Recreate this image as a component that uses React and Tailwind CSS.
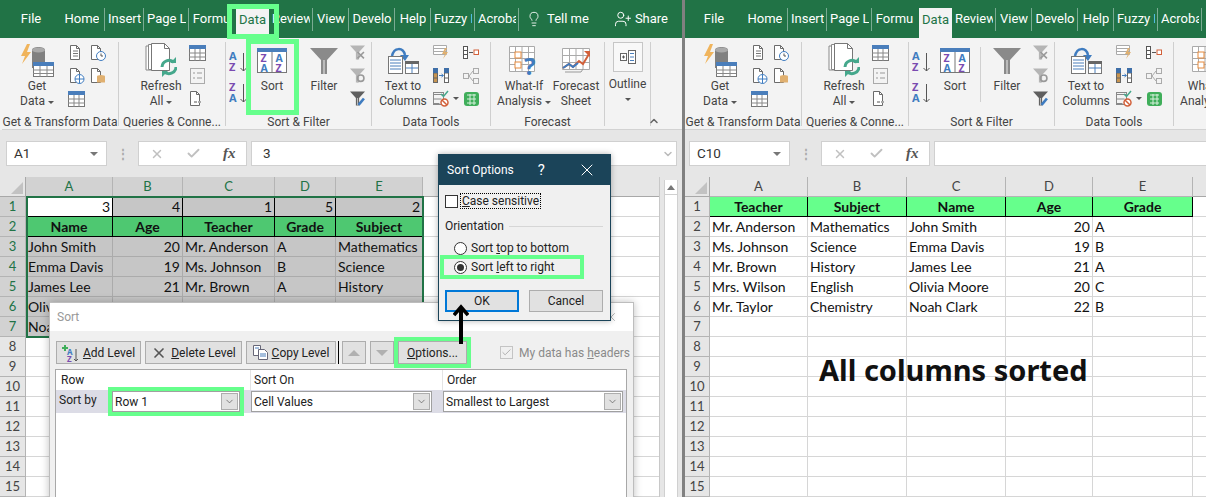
import { Lightbulb, UserPlus, X, Check, ChevronDown, ChevronUp } from 'lucide-react'

const tabs = [
  { label: 'Home', w: 'w-[46px]' },
  { label: 'Insert', w: 'w-[39px]' },
  { label: 'Page L', w: 'w-[45px]' },
  { label: 'Formu', w: 'w-[45px]', last: true },
]
const tabsAfter = [
  { label: 'Review', w: 'w-[44px]' },
  { label: 'View', w: 'w-[36px]' },
  { label: 'Develo', w: 'w-[46px]' },
  { label: 'Help', w: 'w-[36px]' },
  { label: 'Fuzzy L', w: 'w-[44px]' },
  { label: 'Acroba', w: 'w-[44px]' },
]

const leftRows = [
  ['3', '4', '1', '5', '2'],
  ['Name', 'Age', 'Teacher', 'Grade', 'Subject'],
  ['John Smith', '20', 'Mr. Anderson', 'A', 'Mathematics'],
  ['Emma Davis', '19', 'Ms. Johnson', 'B', 'Science'],
  ['James Lee', '21', 'Mr. Brown', 'A', 'History'],
  ['Olivia Moore', '20', 'Mrs. Wilson', 'C', 'English'],
  ['Noah Clark', '22', 'Mr. Taylor', 'B', 'Chemistry'],
]

const rightRows = [
  ['Teacher', 'Subject', 'Name', 'Age', 'Grade'],
  ['Mr. Anderson', 'Mathematics', 'John Smith', '20', 'A'],
  ['Ms. Johnson', 'Science', 'Emma Davis', '19', 'B'],
  ['Mr. Brown', 'History', 'James Lee', '21', 'A'],
  ['Mrs. Wilson', 'English', 'Olivia Moore', '20', 'C'],
  ['Mr. Taylor', 'Chemistry', 'Noah Clark', '22', 'B'],
]

const Doc = ({ children }) => (
  <svg className="w-[18px] h-[18px]" viewBox="0 0 18 18">
    <path d="M2.5 1.5h6l3 3v11h-9z" fill="#fff" stroke="#6b6b6b" />
    <path d="M8.5 1.5v3h3" fill="none" stroke="#6b6b6b" />
    {children}
  </svg>
)

const TableBlue = ({ size = 'w-[17px] h-[16px]' }) => (
  <svg className={size} viewBox="0 0 17 16">
    <rect x="0.5" y="0.5" width="16" height="15" fill="#fff" stroke="#777" />
    <rect x="0" y="0" width="17" height="4" fill="#4a7ebb" />
    <path d="M0 8h17M0 12h17M6 4v12M11 4v12" stroke="#888" />
  </svg>
)

const AZ = ({ flip }) => (
  <svg className="w-[20px] h-[26px]" viewBox="0 0 20 26">
    <text x="0" y="11" fontSize="11" fontWeight="700" fontFamily="Noto Sans" fill={flip ? '#7a4bb0' : '#3f7cc0'}>{flip ? 'Z' : 'A'}</text>
    <text x="0" y="22" fontSize="11" fontWeight="700" fontFamily="Noto Sans" fill={flip ? '#3f7cc0' : '#7a4bb0'}>{flip ? 'A' : 'Z'}</text>
    <path d="M14.5 4v18M11.5 19l3 3 3-3" fill="none" stroke="#555" />
  </svg>
)

const SortIcon = () => (
  <svg className="w-[30px] h-[26px]" viewBox="0 0 30 26">
    <rect x="0.5" y="0.5" width="29" height="24" fill="#fff" stroke="#777" />
    <rect x="0" y="0" width="30" height="4" fill="#4a7ebb" />
    <path d="M15 4v21" stroke="#777" />
    <text x="3.5" y="14" fontSize="10.5" fontWeight="700" fontFamily="Noto Sans" fill="#7a4bb0">Z</text>
    <text x="3.5" y="24" fontSize="10.5" fontWeight="700" fontFamily="Noto Sans" fill="#3f7cc0">A</text>
    <text x="18.5" y="14" fontSize="10.5" fontWeight="700" fontFamily="Noto Sans" fill="#3f7cc0">A</text>
    <text x="18.5" y="24" fontSize="10.5" fontWeight="700" fontFamily="Noto Sans" fill="#7a4bb0">Z</text>
  </svg>
)

const Funnel = ({ className, fill = '#8a8a8a', children }) => (
  <svg className={className} viewBox="0 0 28 26">
    <path d="M0 0h28L17 12v14h-6V12z" fill={fill} />
    <path d="M13 12h2v14h-2z" fill="#bbb" />
    {children}
  </svg>
)

const GetDataIcon = () => (
  <svg className="w-[34px] h-[34px]" viewBox="0 0 34 34">
    <path d="M7 0L1 12h4L2 20l9-12H7l3-8z" fill="#f0b45c" />
    <path d="M12 6c0-4 13-4 13 0v18H12z" fill="#808080" />
    <ellipse cx="18.5" cy="6" rx="6.5" ry="2.5" fill="#aaa" />
    <rect x="13.5" y="18.5" width="20" height="14" fill="#fff" stroke="#777" />
    <rect x="13" y="18" width="21" height="4" fill="#4a7ebb" />
    <path d="M13 26h20M13 29.5h20M20 22v11M27 22v11" stroke="#888" />
  </svg>
)

const RefreshIcon = () => (
  <svg className="w-[32px] h-[36px]" viewBox="0 0 32 36">
    <path d="M1 3h15v24H1z" fill="#fff" stroke="#888" />
    <path d="M3.5 1.5h14v25h-14z" fill="#fff" stroke="#888" />
    <path d="M6.5 0.5h13l5 5v22h-18z" fill="#fff" stroke="#777" />
    <path d="M19.5 0.5v5h5" fill="none" stroke="#777" />
    <path d="M17 24a7 7 0 0 1 12-4.5M31 24a7 7 0 0 1-12 4.5" fill="none" stroke="#45a88c" strokeWidth="3" />
    <path d="M25 20h6v-6zM23 28h-6v6z" fill="#45a88c" />
  </svg>
)

const TextColsIcon = () => (
  <svg className="w-[31px] h-[28px]" viewBox="0 0 31 28">
    <path d="M4 9c2-9 11-9 13-1" fill="none" stroke="#3f7cc0" strokeWidth="2.5" />
    <path d="M12 8h9l-4 6z" fill="#3f7cc0" />
    <rect x="0.5" y="9.5" width="14" height="17" fill="#fff" stroke="#777" />
    <path d="M2 13h11M2 16h11M2 19h11M2 22h11" stroke="#4a7ebb" />
    <rect x="17.5" y="14.5" width="13" height="12" fill="#fff" stroke="#777" />
    <rect x="17" y="14" width="14" height="3" fill="#666" />
    <path d="M24 17v9M18 21h12" stroke="#4a7ebb" />
  </svg>
)

const WhatIfIcon = () => (
  <svg className="w-[30px] h-[30px]" viewBox="0 0 30 30">
    <path d="M0.5 0.5h25v25h-25zM0.5 6.5h25M0.5 12.5h25M0.5 18.5h25M6.5 0.5v25M13 0.5v25M19.5 0.5v25" fill="#fff" stroke="#aaa" />
    <rect x="6" y="6" width="6" height="6" fill="#fff" stroke="#e68a3c" />
    <rect x="6" y="16" width="6" height="6" fill="#fff" stroke="#e68a3c" />
    <text x="15" y="29" fontSize="24" fontWeight="700" fontFamily="Noto Sans" fill="#3f7cc0">?</text>
  </svg>
)

const ForecastIcon = () => (
  <svg className="w-[29px] h-[26px]" viewBox="0 0 29 26">
    <path d="M0.5 0.5h27v21h-27zM0.5 7.5h27M0.5 14.5h27M7.5 0.5v21M14 0.5v21M21 0.5v21" fill="#fff" stroke="#aaa" />
    <path d="M1 20l6-4 4 3 6-6 4 3 6-10" fill="none" stroke="#d2603a" strokeWidth="2" />
    <path d="M1 20l6-4 4 3 5-4" fill="none" stroke="#3f7cc0" strokeWidth="2" />
    <path d="M22 3h6v6z" fill="#d2603a" />
    <path d="M3 24h16l2-3" fill="none" stroke="#999" />
  </svg>
)

const Big = ({ icon, lines, caret, className = '' }) => (
  <div className={`flex flex-col items-center shrink-0 ${className}`}>
    <div className="h-[37px] flex items-center justify-center">{icon}</div>
    {lines.map((l, i) => (
      <div key={i} className="h-[15px] leading-[15px] text-[12px] whitespace-nowrap text-[#444] flex items-center gap-[3px]">
        {l}
        {caret && i === lines.length - 1 && <span className="border-x-[3px] border-t-[3px] border-x-transparent border-t-[#555] mt-[2px]" />}
      </div>
    ))}
  </div>
)

const Group = ({ label, w, children }) => (
  <div className={`${w} h-[84px] shrink-0 border-r border-[#cfcfcf] flex flex-col`}>
    <div className="h-[73px] shrink-0 flex">{children}</div>
    <div className="h-[14px] shrink-0 leading-[14px] text-[12px] text-[#444] text-center whitespace-nowrap">{label}</div>
  </div>
)

const Small = ({ children, className = '' }) => (
  <div className={`h-[23px] flex items-center justify-center ${className}`}>{children}</div>
)

function Ribbon({ clip }) {
  return (
    <div className="h-[92px] bg-[#f3f3f3] border-b border-[#d2d2d2] pt-[4px] flex overflow-hidden relative">
      <Group label="Get & Transform Data" w="w-[117px]">
        <Big className="w-[58px] ml-[6px]" icon={<GetDataIcon />} lines={['Get', 'Data']} caret />
        <div className="w-[42px] mt-[-1px]">
          <div className="grid grid-cols-2">
            <Small>
              <Doc><path d="M5 7h5M5 9.5h5M5 12h5" stroke="#777" /></Doc>
            </Small>
            <Small>
              <Doc><circle cx="12" cy="12" r="4.5" fill="#fff" stroke="#3f7cc0" /><path d="M12 9.5V12h2" fill="none" stroke="#555" /></Doc>
            </Small>
            <Small>
              <Doc><circle cx="11.5" cy="12" r="4.5" fill="#fff" stroke="#3f7cc0" /><path d="M7 12h9M11.5 7.5v9" stroke="#3f7cc0" /></Doc>
            </Small>
            <Small>
              <Doc><ellipse cx="12" cy="9.5" rx="4" ry="1.5" fill="#e0b070" /><path d="M8 9.5v6h8v-6" fill="#e0b070" /></Doc>
            </Small>
          </div>
          <Small className="w-[21px]"><TableBlue /></Small>
        </div>
      </Group>
      <Group label="Queries & Conne..." w="w-[107px]">
        <Big className="w-[50px] ml-[17px]" icon={<RefreshIcon />} lines={['Refresh', 'All']} caret />
        <div className="ml-[1px] w-[20px] mt-[-1px]">
          <Small><TableBlue /></Small>
          <Small>
            <svg className="w-[15px] h-[16px]" viewBox="0 0 15 16">
              <rect x="0.5" y="0.5" width="14" height="15" fill="#f3f3f3" stroke="#aaa" />
              <path d="M3 5h2M7 5h5M3 10h2M7 10h5" stroke="#999" />
            </svg>
          </Small>
          <Small>
            <Doc><path d="M6 12h3M10 12h3" stroke="#aaa" strokeWidth="2" /></Doc>
          </Small>
        </div>
      </Group>
      <Group label="Sort & Filter" w="w-[146px]">
        <div className="ml-[3px] w-[20px] flex flex-col pt-[7px] gap-[5px]"><AZ /><AZ flip /></div>
        <Big className="w-[32px] ml-[7px]" icon={<SortIcon />} lines={['Sort']} />
        <div className="w-px h-[55px] ml-[9px] mt-[5px] bg-[#d0d0d0]" />
        <Big className="w-[40px] ml-[6px]" icon={<Funnel className="w-[28px] h-[26px]" />} lines={['Filter']} />
        <div className="ml-[3px] w-[20px] mt-[-1px]">
          <Small><Funnel className="w-[15px] h-[15px]" fill="#b5b5b5"><path d="M14 12l12 12M26 12L14 24" stroke="#999" strokeWidth="3" /></Funnel></Small>
          <Small><Funnel className="w-[15px] h-[15px]" fill="#b5b5b5"><circle cx="20" cy="18" r="6" fill="none" stroke="#999" strokeWidth="3" /></Funnel></Small>
          <Small><Funnel className="w-[15px] h-[15px]" fill="#5f5f5f"><path d="M16 25L26 13" stroke="#3f7cc0" strokeWidth="5" /></Funnel></Small>
        </div>
      </Group>
      <Group label="Data Tools" w="w-[119px]">
        <Big className="w-[54px] ml-[4px]" icon={<TextColsIcon />} lines={['Text to', 'Columns']} />
        <div className="w-[20px] ml-[1px] mt-[-1px]">
          <Small>
            <svg className="w-[16px] h-[15px]" viewBox="0 0 16 15">
              <path d="M0.5 0.5h13v9h-13zM0.5 3.5h13M0.5 6.5h13" fill="#fff" stroke="#aaa" />
              <path d="M12 3l-3 6h3l-2 5 5-7h-3l2-4z" fill="#e0b070" />
            </svg>
          </Small>
          <Small>
            <svg className="w-[16px] h-[15px]" viewBox="0 0 16 15">
              <rect x="0.5" y="0.5" width="4" height="14" fill="#c89550" stroke="#666" />
              <rect x="11.5" y="0.5" width="4" height="14" fill="#fff" stroke="#666" />
              <path d="M0 5h5M11 5h5M0 10h5M11 10h5" stroke="#666" />
              <rect x="0" y="0" width="5" height="5" fill="#3f6fa8" />
              <rect x="11" y="0" width="5" height="5" fill="#3f6fa8" />
              <path d="M6 7.5h4M8.5 6l2 1.5-2 1.5" fill="none" stroke="#3f7cc0" />
            </svg>
          </Small>
          <Small>
            <svg className="w-[17px] h-[17px]" viewBox="0 0 17 17">
              <path d="M0.5 4.5h10M0.5 9h8M0.5 13.5h6" stroke="#888" />
              <rect x="0.5" y="2.5" width="10" height="12" fill="none" stroke="#888" />
              <path d="M8 4l2.5 2.5L15 1" fill="none" stroke="#45a88c" strokeWidth="1.5" />
              <circle cx="11.5" cy="12.5" r="3.5" fill="#fff" stroke="#d2603a" strokeWidth="1.5" />
              <path d="M9 10l5 5" stroke="#d2603a" strokeWidth="1.5" />
            </svg>
          </Small>
        </div>
        <div className="w-[10px] h-[23px] mt-[45px] flex items-center justify-center"><span className="border-x-[3px] border-t-[3px] border-x-transparent border-t-[#555]" /></div>
        <div className="w-[18px] ml-[1px] mt-[-1px]">
          <Small>
            <svg className="w-[16px] h-[13px]" viewBox="0 0 16 13">
              <rect x="0.5" y="0.5" width="4" height="12" fill="#fff" stroke="#555" />
              <path d="M0 4.5h5M0 8.5h5M6 6.5h4" stroke="#555" />
              <rect x="11" y="4" width="4.5" height="4.5" fill="#fff" stroke="#d2603a" />
            </svg>
          </Small>
          <Small>
            <svg className="w-[16px] h-[16px]" viewBox="0 0 16 16">
              <rect x="0.5" y="5.5" width="5" height="5" fill="#f3f3f3" stroke="#aaa" />
              <rect x="10.5" y="0.5" width="5" height="5" fill="#f3f3f3" stroke="#aaa" />
              <rect x="10.5" y="10.5" width="5" height="5" fill="#f3f3f3" stroke="#aaa" />
              <path d="M6 8l4-5M6 8l4 5" stroke="#aaa" />
            </svg>
          </Small>
          <Small>
            <svg className="w-[15px] h-[16px]" viewBox="0 0 15 16">
              <rect x="0" y="1" width="15" height="14" rx="3" fill="#3fae5a" />
              <path d="M3 4h9M3 8h9M3 12h9M6 3v11M10 3v11" stroke="#d8f0dd" />
            </svg>
          </Small>
        </div>
      </Group>
      {!clip && (
        <>
          <Group label="Forecast" w="w-[114px]">
            <Big className="w-[52px] ml-[7px]" icon={<WhatIfIcon />} lines={['What-If', 'Analysis']} caret />
            <Big className="w-[44px] ml-[4px]" icon={<ForecastIcon />} lines={['Forecast', 'Sheet']} />
          </Group>
          <Group label="" w="w-[46px]">
            <div className="w-[46px] flex flex-col items-center">
              <div className="w-[30px] h-[30px] border border-[#c6c6c6] bg-[#f8f8f8] flex items-center justify-center">
                <svg className="w-[16px] h-[14px]" viewBox="0 0 16 14">
                  <rect x="0.5" y="3.5" width="6" height="7" fill="#fff" stroke="#666" />
                  <path d="M2 7h3M3.5 5.5v3" stroke="#555" />
                  <rect x="8.5" y="0.5" width="7" height="13" fill="#fff" stroke="#666" />
                  <path d="M10 3.5h4M10 7h4M10 10.5h4" stroke="#4a7ebb" />
                </svg>
              </div>
              <div className="h-[15px] leading-[15px] text-[12px] text-[#444] mt-[5px]">Outline</div>
              <span className="border-x-[3px] border-t-[3px] border-x-transparent border-t-[#555] mt-[6px]" />
            </div>
          </Group>
          <div className="flex-1 relative">
            <ChevronUp className="absolute right-[22px] bottom-[2px] w-[12px] h-[12px] text-[#666]" strokeWidth={3} />
          </div>
        </>
      )}
      {clip && (
        <div className="shrink-0 w-[60px] h-[85px] flex flex-col">
          <div className="h-[70px] flex">
            <Big className="w-[52px] ml-[7px]" icon={<WhatIfIcon />} lines={['What-If', 'Analysis']} caret />
          </div>
        </div>
      )}
    </div>
  )
}

function Tab({ label, w }) {
  return (
    <div className={`${w} shrink-0 h-[38px] flex items-center justify-center relative overflow-hidden px-[3px]`}>
      <span className="whitespace-nowrap overflow-hidden text-white text-[13px]">{label}</span>
    </div>
  )
}

const Sep = () => <div className="w-px h-[23px] bg-[#7aab92] shrink-0 -ml-px" />

function TabBar({ extra }) {
  return (
    <div className="h-[38px] bg-[#217346] flex items-center overflow-hidden">
      <div className="w-[57px] shrink-0 text-center pl-[1px] text-white text-[13px]">File</div>
      {tabs.map((t) => (
        <div key={t.label} className="contents">
          <Tab label={t.label} w={t.w} />
          {!t.last && <Sep />}
        </div>
      ))}
      <div className="w-[2px] shrink-0" />
      <div className="w-[33px] h-[30px] mt-[8px] shrink-0 bg-[#f3f3f3] text-[#217346] text-[13px] flex items-center justify-center pb-[7px]">Data</div>
      {tabsAfter.map((t) => (
        <div key={t.label} className="contents">
          <Tab label={t.label} w={t.w} />
          <Sep />
        </div>
      ))}
      {extra && (
        <>
          <Lightbulb className="ml-[7px] w-[16px] h-[18px] text-white shrink-0" strokeWidth={1.3} />
          <span className="ml-[5px] text-white text-[13px] whitespace-nowrap">Tell me</span>
          <UserPlus className="ml-[25px] w-[18px] h-[18px] text-white shrink-0" strokeWidth={1.3} />
          <span className="ml-[3px] text-white text-[13px]">Share</span>
        </>
      )}
    </div>
  )
}

function FormulaBar({ name, value, full }) {
  return (
    <div className="h-[47px] bg-[#e6e6e6] flex items-start pt-[11px] pl-[4px]">
      <div className="w-[101px] h-[25px] bg-white border border-[#d0d0d0] flex items-center justify-between pl-[7px] pr-[8px]">
        <span className="text-[13.5px] text-[#333]">{name}</span>
        <span className="border-x-[4px] border-t-[4px] border-x-transparent border-t-[#777]" />
      </div>
      <div className="w-[31px] h-[25px] flex items-center justify-center text-[#aaa] text-[12px] leading-none font-bold">⋮</div>
      <div className="w-[109px] h-[25px] bg-white border border-[#d0d0d0] flex items-center pl-[11px]">
        <X className="w-[14px] h-[14px] text-[#c0c0c0]" strokeWidth={2.5} />
        <Check className="ml-[22px] w-[15px] h-[15px] text-[#c0c0c0]" strokeWidth={3} />
        <span className="ml-[22px] text-[15px] text-[#555] italic font-bold font-['Liberation_Serif',serif]">fx</span>
      </div>
      <div className={`ml-[4px] h-[25px] bg-white border border-[#d0d0d0] flex items-center justify-between pl-[11px] pr-[2px] ${full ? 'w-[426px]' : 'flex-1 border-r-0'}`}>
        <span className="text-[13.5px] text-[#333]">{value}</span>
        {full && <ChevronDown className="w-[12px] h-[12px] text-[#bbb]" strokeWidth={3} />}
      </div>
    </div>
  )
}

const colHeadClass = "h-[20px] border-r border-b flex items-center justify-center text-[13px] font-['Lato',sans-serif]"

function Corner() {
  return (
    <div className="h-[20px] relative border-b border-r border-[#a8a8a8] bg-[#e6e6e6]">
      <svg className="absolute right-[2px] bottom-[2px] w-[12px] h-[12px]" viewBox="0 0 12 12"><path d="M12 0v12H0z" fill="#c2c2c2" /></svg>
    </div>
  )
}

function LeftGrid() {
  const letters = ['A', 'B', 'C', 'D', 'E']
  const empties = [8, 9, 10, 11, 12, 13, 14, 15]
  return (
    <div className="flex-1 bg-[#e6e6e6] flex overflow-hidden relative">
      <div className="w-[660px] shrink-0 grid grid-cols-[26px_87px_70px_92px_61px_87px_1fr] auto-rows-[20px] bg-white border-r border-[#c8c8c8] font-['Lato',sans-serif] text-[14px] text-[#111] relative">
        <Corner />
        {letters.map((c) => (
          <div key={c} className={`${colHeadClass} bg-[#d2d2d2] text-[#217346] border-[#b4b4b4]`}>{c}</div>
        ))}
        <div className="h-[20px] bg-[#e6e6e6] border-b border-[#a8a8a8]" />
        {leftRows.map((row, r) => (
          <div key={r} className="contents">
            <div className="bg-[#d2d2d2] text-[#217346] text-[13px] border-b border-r border-[#b4b4b4] flex items-center justify-center">{r + 1}</div>
            {row.map((v, c) => {
              const numeric = /^\d+$/.test(v) && r !== 1
              if (r === 1) {
                return <div key={c} className="bg-[#4ec871] border-r border-b border-black font-bold flex items-center justify-center">{v}</div>
              }
              if (r === 0) {
                return <div key={c} className={`${c === 0 ? 'bg-white' : 'bg-[#c6c6c6]'} border-r border-b border-black flex items-center justify-end pr-[2px]`}>{v}</div>
              }
              return <div key={c} className={`bg-[#c6c6c6] border-r border-b border-[#ababab] flex items-center px-[2px] whitespace-nowrap overflow-hidden ${numeric ? 'justify-end' : ''}`}>{v}</div>
            })}
            <div className="border-b border-[#d6d6d6]" />
          </div>
        ))}
        {empties.map((n) => (
          <div key={n} className="contents">
            <div className="bg-[#e6e6e6] text-[#444] text-[13px] border-b border-r border-[#b4b4b4] flex items-center justify-center">{n}</div>
            {[0, 1, 2, 3, 4].map((c) => <div key={c} className="border-r border-b border-[#d6d6d6]" />)}
            <div className="border-b border-[#d6d6d6]" />
          </div>
        ))}
        <div className="absolute left-[26px] top-[19px] w-[398px] h-[142px] border-2 border-[#217346] pointer-events-none" />
      </div>
      <div className="ml-[4px] mt-[3px] w-[14px] bg-white border-x border-[#d0d0d0]">
        <div className="h-[15px] border-b border-[#d0d0d0] flex items-center justify-center">
          <span className="border-x-[4px] border-b-[5px] border-x-transparent border-b-[#777]" />
        </div>
      </div>
    </div>
  )
}

function RightGrid() {
  const letters = ['A', 'B', 'C', 'D', 'E']
  const empties = [7, 8, 9, 10, 11, 12, 13, 14, 15]
  return (
    <div className="flex-1 bg-white overflow-hidden relative">
      <div className="grid grid-cols-[25px_98px_99px_99px_87px_100px_1fr] auto-rows-[20px] font-['Lato',sans-serif] text-[14px] text-[#111]">
        <Corner />
        {letters.map((c) => (
          <div key={c} className={`${colHeadClass} bg-[#e6e6e6] text-[#444] border-[#b4b4b4]`}>{c}</div>
        ))}
        <div className="h-[20px] bg-[#e6e6e6] border-b border-[#a8a8a8]" />
        {rightRows.map((row, r) => (
          <div key={r} className="contents">
            <div className="bg-[#e6e6e6] text-[#444] text-[13px] border-b border-r border-[#b4b4b4] flex items-center justify-center">{r + 1}</div>
            {row.map((v, c) => {
              if (r === 0) {
                return <div key={c} className="bg-[#66ff8c] border-r border-b border-black font-bold flex items-center justify-center">{v}</div>
              }
              return <div key={c} className={`border-r border-b border-[#d6d6d6] flex items-center px-[2px] whitespace-nowrap ${c === 3 ? 'justify-end' : ''}`}>{v}</div>
            })}
            <div className="border-b border-[#d6d6d6]" />
          </div>
        ))}
        {empties.map((n) => (
          <div key={n} className="contents">
            <div className="bg-[#e6e6e6] text-[#444] text-[13px] border-b border-r border-[#b4b4b4] flex items-center justify-center">{n}</div>
            {[0, 1, 2, 3, 4].map((c) => <div key={c} className="border-r border-b border-[#d6d6d6]" />)}
            <div className="border-b border-[#d6d6d6]" />
          </div>
        ))}
      </div>
      <div className="absolute left-[134px] top-[178px] text-[29px] leading-none font-bold text-[#111] font-['Noto_Sans',sans-serif] whitespace-nowrap">All columns sorted</div>
    </div>
  )
}

const DlgBtn = ({ children, className = '' }) => (
  <div className={`h-[23px] bg-[#e1e1e1] border border-[#adadad] flex items-center justify-center text-[12px] text-[#222] whitespace-nowrap shrink-0 ${className}`}>{children}</div>
)

const Combo = ({ value, className = '' }) => (
  <div className={`h-[21px] bg-white border border-[#a0a0a0] flex items-center justify-between pl-[2px] pr-[1px] text-[12px] text-[#222] ${className}`}>
    <span>{value}</span>
    <span className="w-[17px] h-[17px] bg-[#e1e1e1] border border-[#adadad] flex items-center justify-center">
      <ChevronDown className="w-[11px] h-[11px] text-[#555]" strokeWidth={1.5} />
    </span>
  </div>
)

function SortDialog() {
  return (
    <div className="absolute left-[49px] top-[302px] w-[585px] h-[200px] bg-[#f0f0f0] border border-[#bdbdbd] shadow-[0_0_8px_rgba(0,0,0,0.25)] flex flex-col">
      <div className="h-[28px] bg-white flex items-center justify-between pl-[7px] pr-[15px] text-[12px] text-[#999]">
        <span>Sort</span>
        <X className="w-[14px] h-[14px] text-[#aaa]" strokeWidth={1.5} />
      </div>
      <div className="flex items-center pl-[6px] pt-[10px] h-[33px]">
        <DlgBtn className="w-[85px] gap-[3px]">
          <svg className="w-[18px] h-[18px]" viewBox="0 0 18 18">
            <path d="M3 1v6M0 4h6" stroke="#3fae5a" strokeWidth="2" />
            <text x="5" y="11" fontSize="8" fontWeight="700" fontFamily="Noto Sans" fill="#3f7cc0">A</text>
            <text x="5" y="18" fontSize="8" fontWeight="700" fontFamily="Noto Sans" fill="#7a4bb0">Z</text>
            <path d="M14 5v12M12 15l2 2 2-2" fill="none" stroke="#555" />
          </svg>
          <span><u>A</u>dd Level</span>
        </DlgBtn>
        <DlgBtn className="w-[97px] ml-[4px] gap-[4px]">
          <X className="w-[16px] h-[16px] text-[#555]" strokeWidth={2.5} />
          <span><u>D</u>elete Level</span>
        </DlgBtn>
        <DlgBtn className="w-[90px] ml-[4px] gap-[4px]">
          <svg className="w-[15px] h-[15px]" viewBox="0 0 15 15">
            <path d="M0.5 0.5h7v10h-7z" fill="#fff" stroke="#667" />
            <path d="M5.5 4.5h6l3 3v7h-9z" fill="#fff" stroke="#667" />
            <path d="M7 9h6M7 11h6M2 3h4" stroke="#4a7ebb" />
          </svg>
          <span><u>C</u>opy Level</span>
        </DlgBtn>
        <div className="w-px h-[23px] bg-black ml-[2px]" />
        <DlgBtn className="w-[24px] ml-[3px]"><span className="border-x-[6px] border-b-[6px] border-x-transparent border-b-[#b0b0b0]" /></DlgBtn>
        <DlgBtn className="w-[24px] ml-[4px]"><span className="border-x-[6px] border-t-[6px] border-x-transparent border-t-[#b0b0b0]" /></DlgBtn>
        <DlgBtn className="w-[69px] ml-[4px] outline-4 outline-[#66ff8c]"><span><u>O</u>ptions...</span></DlgBtn>
        <div className="ml-[33px] w-[13px] h-[13px] border border-[#c4c4c4] flex items-center justify-center">
          <Check className="w-[11px] h-[11px] text-[#aaa]" strokeWidth={2} />
        </div>
        <span className="ml-[6px] text-[12px] text-[#8a8a8a] whitespace-nowrap">My data has <u>h</u>eaders</span>
      </div>
      <div className="ml-[5px] mt-[5px] w-[572px] flex-1 bg-white border border-[#a8a8a8]">
        <div className="h-[20px] flex text-[12px] text-[#222] items-center">
          <div className="w-[194px] pl-[5px] h-full flex items-center">Row</div>
          <div className="w-[192px] pl-[3px] h-full flex items-center border-l border-[#e4e4e4]">Sort On</div>
          <div className="flex-1 pl-[4px] h-full flex items-center border-l border-[#e4e4e4]">Order</div>
        </div>
        <div className="h-[23px] flex bg-[#dcdce6] items-center">
          <span className="w-[56px] pl-[3px] pb-[4px] text-[12px] text-[#222] shrink-0">Sort by</span>
          <Combo value="Row 1" className="w-[128px] outline-4 outline-[#66ff8c]" />
          <Combo value="Cell Values" className="w-[181px] ml-[11px]" />
          <Combo value="Smallest to Largest" className="w-[180px] ml-[11px]" />
        </div>
      </div>
    </div>
  )
}

function SortOptions() {
  return (
    <div className="absolute left-[438px] top-[154px] w-[173px] h-[167px] bg-[#f0f0f0] border border-[#1b4459] shadow-[0_0_6px_rgba(0,0,0,0.3)] flex flex-col">
      <div className="h-[30px] bg-[#1b4459] flex items-center pl-[8px] text-white text-[12px] shrink-0">
        <span>Sort Options</span>
        <span className="ml-[24px] text-[15px]">?</span>
        <X className="ml-[32px] w-[20px] h-[20px]" strokeWidth={1.2} />
      </div>
      <div className="flex items-center pl-[6px] mt-[8px] text-[12px] text-[#222]">
        <span className="w-[13px] h-[13px] bg-white border border-[#333] shrink-0" />
        <span className="ml-[2px] px-[1px] border border-dotted border-black leading-[14px]"><u>C</u>ase sensitive</span>
      </div>
      <div className="flex items-center pl-[6px] mt-[8px] text-[12px] text-[#222]">
        <span>Orientation</span>
        <div className="ml-[5px] w-[94px] h-px bg-[#d6d6d6]" />
      </div>
      <div className="flex items-center pl-[15px] mt-[5px] h-[16px] text-[12px] text-[#222]">
        <span className="w-[13px] h-[13px] rounded-full bg-white border border-[#333]" />
        <span className="ml-[4px]">Sort <u>t</u>op to bottom</span>
      </div>
      <div className="flex items-center pl-[10px] ml-[5px] mt-[3px] h-[16px] w-[136px] text-[12px] text-[#222] outline-4 outline-[#66ff8c]">
        <span className="w-[13px] h-[13px] rounded-full bg-white border border-[#333] flex items-center justify-center">
          <span className="w-[7px] h-[7px] rounded-full bg-[#333]" />
        </span>
        <span className="ml-[4px]">Sort <u>l</u>eft to right</span>
      </div>
      <div className="flex pl-[6px] mt-[15px] gap-[10px]">
        <div className="w-[74px] h-[22px] bg-[#e1e1e1] border-2 border-[#0078d7] flex items-center justify-center text-[12px] text-[#222]">OK</div>
        <div className="w-[74px] h-[22px] bg-[#e1e1e1] border border-[#adadad] flex items-center justify-center text-[12px] text-[#222]">Cancel</div>
      </div>
    </div>
  )
}

function LeftPanel() {
  return (
    <div className="w-[682px] h-[497px] shrink-0 relative overflow-hidden flex flex-col">
      <div className="pl-[2px] bg-[#217346]"><TabBar extra /></div>
      <div className="pl-[2px] bg-[#f3f3f3]"><Ribbon /></div>
      <div className="pl-[2px] bg-[#e6e6e6]"><FormulaBar name="A1" value="3" full /></div>
      <LeftGrid />
      <div className="absolute left-[227px] top-[4px] w-[52px] h-[35px] border-[5px] border-[#66ff8c]" />
      <div className="absolute left-[246px] top-[39px] w-[53px] h-[76px] border-[5px] border-[#66ff8c]" />
      <SortDialog />
      <SortOptions />
      <svg className="absolute left-[453px] top-[304px] w-[16px] h-[40px]" viewBox="0 0 16 40">
        <path d="M8 40V4" stroke="#000" strokeWidth="4" />
        <path d="M1 11l7-8 7 8" fill="none" stroke="#000" strokeWidth="3.5" />
      </svg>
    </div>
  )
}

function RightPanel() {
  return (
    <div className="flex-1 h-[497px] overflow-hidden flex flex-col">
      <TabBar />
      <Ribbon clip />
      <FormulaBar name="C10" value="" />
      <RightGrid />
    </div>
  )
}

export default function App() {
  return (
    <div className="w-[1206px] h-[497px] flex overflow-hidden bg-white font-['Roboto',sans-serif]">
      <LeftPanel />
      <div className="w-[3px] shrink-0 bg-[#808080]" />
      <RightPanel />
    </div>
  )
}
